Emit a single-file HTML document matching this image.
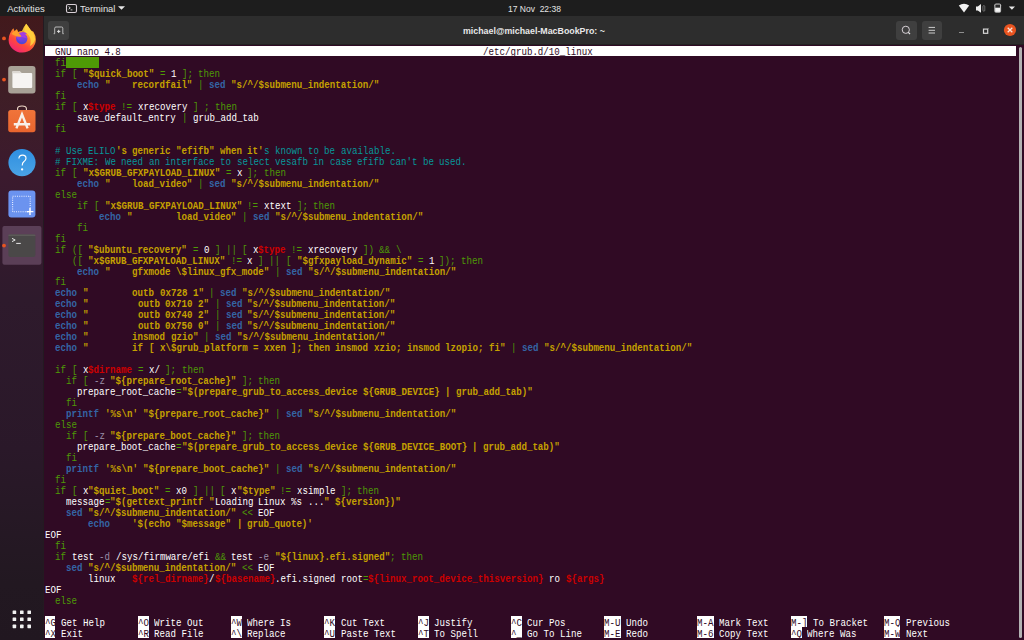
<!DOCTYPE html>
<html><head><meta charset="utf-8">
<style>
html,body{margin:0;padding:0;width:1024px;height:640px;overflow:hidden;background:#300a24;}
body{position:relative;font-family:"Liberation Sans",sans-serif;}
.a{position:absolute;}
#top{left:0;top:0;width:1024px;height:16px;background:#1d1d1d;}
#dock{left:0;top:16px;width:44px;height:624px;background:linear-gradient(180deg,#42191c 0%,#3f1e26 12.7%,#3b1a2e 25.5%,#2e1a2c 45.5%,#2a1829 69.5%,#221821 91%,#211720 100%);}
#dedge{left:43px;top:16px;width:1px;height:624px;background:#231a21;}
#hdr{left:44px;top:16px;width:980px;height:28px;background:#2d2d2d;}
#hline{left:44px;top:44px;width:980px;height:1px;background:#222222;}
#term{left:44px;top:45px;width:980px;height:595px;background:#300a24;}
#tbar{left:44.5px;top:45.6px;width:971px;height:10.75px;background:#ffffff;}
#sb{left:1018.6px;top:46.8px;width:3.6px;height:590.8px;background:#b3b3b3;border-radius:1.8px;}
.tt{position:absolute;white-space:pre;transform-origin:0 0;color:#e4e4e4;font-size:10px;line-height:12px;}
.btn{position:absolute;background:#3f3f3f;border-radius:3px;}
i{position:absolute;font-style:normal;font-family:"Liberation Mono",monospace;font-size:10px;line-height:10.97px;white-space:pre;transform-origin:0 0;transform:scaleX(0.9143);margin-top:2.5px;}
i.n{color:#ffffff;}
i.g{color:#4e9a06;}
i.b{color:#3465a4;font-weight:bold;}
i.r{color:#cc0000;font-weight:bold;}
i.c{color:#06989a;}
i.y{color:#c4a000;font-weight:bold;}
i.d{color:#9a90a8;}
i.k{color:#300a24;}
.hk{position:absolute;background:#ffffff;}
.tws{position:absolute;background:#4e9a06;}
</style></head><body>
<div id="top" class="a"></div>
<div id="dock" class="a"></div>
<div id="dedge" class="a"></div>
<div id="hdr" class="a"></div>
<div id="hline" class="a"></div>
<div id="term" class="a"></div>
<div id="tbar" class="a"></div>
<div id="sb" class="a"></div>

<!-- top bar text -->
<div class="tt" style="left:7.2px;top:3px;font-size:9.5px;transform:scaleX(1.0)">Activities</div>
<svg class="a" style="left:65px;top:3px" width="13" height="11" viewBox="0 0 13 11">
 <rect x="1.5" y="1.5" width="10" height="8" rx="1.6" fill="none" stroke="#d8cfd6" stroke-width="1.1"/>
 <path d="M3.6 3.6 L5.3 4.9 L3.6 6.2" fill="none" stroke="#e0e0e0" stroke-width="0.9"/>
 <path d="M5.6 6.9 H7.4" stroke="#e0e0e0" stroke-width="0.9"/>
</svg>
<div class="tt" style="left:79.8px;top:3px;font-size:9.5px;transform:scaleX(0.986)">Terminal</div>
<svg class="a" style="left:117px;top:5px" width="9" height="6" viewBox="0 0 9 6"><path d="M1 1.3 H8 L4.5 4.8Z" fill="#e8e8e8"/></svg>
<div class="tt" style="left:507.9px;top:2.5px;font-size:9px;transform:scaleX(0.944)">17 Nov  22:38</div>

<!-- tray icons -->
<svg class="a" style="left:958px;top:3px" width="12" height="11" viewBox="0 0 12 11"><path d="M0.8 2.6 Q6 -1.2 11.2 2.6 L6 9.4 Z" fill="#f2f2f2"/></svg>
<svg class="a" style="left:975px;top:3px" width="11" height="11" viewBox="0 0 11 11">
 <path d="M1 3.6 H2.8 L6 1 V9.8 L2.8 7.4 H1 Z" fill="#efefef"/>
 <rect x="7.9" y="2.6" width="1.9" height="5.6" rx="0.95" fill="none" stroke="#8c8c8c" stroke-width="0.7"/>
</svg>
<svg class="a" style="left:993px;top:2.5px" width="9" height="11" viewBox="0 0 9 11">
 <rect x="1.3" y="0.4" width="6.8" height="9.4" rx="1.8" fill="#bdbdbd"/>
 <rect x="2.4" y="1.6" width="4.6" height="3.2" fill="#2a2a2a"/>
 <rect x="2.4" y="4.8" width="4.6" height="3.9" fill="#f4f4f4"/>
</svg>
<svg class="a" style="left:1008px;top:5px" width="8" height="6" viewBox="0 0 8 6"><path d="M0.8 1.5 H7 L3.9 4.8Z" fill="#e8e8e8"/></svg>

<!-- header -->
<div class="btn" style="left:48.1px;top:21px;width:20.8px;height:19px;"></div>
<svg class="a" style="left:48px;top:21px" width="21" height="19" viewBox="0 0 21 19">
 <path d="M6.7 12.6 V7.2 Q6.7 6 7.9 6 H13.6 Q14.8 6 14.8 7.2 V12.6" fill="none" stroke="#d0d0d0" stroke-width="0.85"/>
 <path d="M5.6 12.7 H7 M14.5 12.7 H15.9" stroke="#d0d0d0" stroke-width="0.7"/>
 <path d="M9.1 10.4 H12.3 M10.7 8.8 V12" stroke="#e6e6e6" stroke-width="1"/>
</svg>
<div class="tt" style="left:462.8px;top:24.6px;font-size:9.4px;font-weight:bold;color:#e8e8e8;transform:scaleX(0.942)">michael@michael-MacBookPro: ~</div>
<div class="btn" style="left:895.9px;top:21px;width:20.8px;height:19px;"></div>
<svg class="a" style="left:896px;top:21px" width="21" height="19" viewBox="0 0 21 19">
 <circle cx="9.8" cy="8.8" r="3.6" fill="none" stroke="#d9d2d8" stroke-width="1"/>
 <path d="M12.3 11.3 L14 13" stroke="#e6e6e6" stroke-width="1.2"/>
</svg>
<div class="btn" style="left:922.1px;top:21px;width:19.7px;height:19px;"></div>
<svg class="a" style="left:922px;top:21px" width="20" height="19" viewBox="0 0 20 19">
 <path d="M6.6 6.4 H13 M6.6 9.3 H13 M6.6 12 H13" stroke="#dedede" stroke-width="0.9"/>
</svg>
<div class="a" style="left:958.8px;top:31.5px;width:5.2px;height:1.4px;background:#8e8e8e;"></div>
<svg class="a" style="left:982px;top:27px" width="8" height="8" viewBox="0 0 8 8">
 <rect x="1.5" y="2.1" width="4.2" height="4.2" fill="none" stroke="#d6d6d6" stroke-width="1.2"/>
 <path d="M5.6 2.2 L6.8 0.9" stroke="#aaaaaa" stroke-width="0.6"/>
</svg>
<svg class="a" style="left:1003px;top:23px" width="14" height="14" viewBox="0 0 14 14">
 <circle cx="7" cy="7" r="6.1" fill="#e95420"/>
 <path d="M4.7 4.7 L9.3 9.3 M9.3 4.7 L4.7 9.3" stroke="#fbe6dc" stroke-width="1.3"/>
</svg>

<!-- dock -->
<div class="a" style="left:2.5px;top:3px;"></div>
<svg class="a" style="left:0;top:16px" width="44" height="624" viewBox="0 16 44 624">
 <defs>
  <radialGradient id="ffo" cx="0.3" cy="0.85" r="0.9">
   <stop offset="0" stop-color="#ff3d79"/><stop offset="0.45" stop-color="#ff6a2a"/><stop offset="0.8" stop-color="#ffb320"/><stop offset="1" stop-color="#ffe040"/>
  </radialGradient>
  <radialGradient id="ffp" cx="0.4" cy="0.7" r="0.8">
   <stop offset="0" stop-color="#5b3ed8"/><stop offset="1" stop-color="#a238d6"/>
  </radialGradient>
  <linearGradient id="sw" x1="0" y1="0" x2="0" y2="1"><stop offset="0" stop-color="#f0743a"/><stop offset="1" stop-color="#e9652e"/></linearGradient>
  <linearGradient id="hp" x1="0" y1="0" x2="0" y2="1"><stop offset="0" stop-color="#2f8fe0"/><stop offset="1" stop-color="#4aa3e6"/></linearGradient>
 </defs>
 <!-- running dots -->
 <circle cx="4" cy="38.4" r="1.9" fill="#e95420"/>
 <circle cx="4" cy="79.6" r="1.9" fill="#e95420"/>
 <!-- firefox -->
 <defs>
  <linearGradient id="ffb" x1="0.2" y1="1" x2="0.8" y2="0">
   <stop offset="0" stop-color="#ee1f7d"/><stop offset="0.35" stop-color="#ff4a3a"/><stop offset="0.65" stop-color="#ff9a2a"/><stop offset="1" stop-color="#ffd83a"/>
  </linearGradient>
  <linearGradient id="ffg" x1="0.3" y1="0" x2="0.6" y2="1">
   <stop offset="0" stop-color="#b23fe0"/><stop offset="0.5" stop-color="#7a3fe0"/><stop offset="1" stop-color="#4f46d6"/>
  </linearGradient>
 </defs>
 <path d="M10.2 33 Q12 29.5 13.4 28.3 Q14 30.5 14.8 31.2 Q16 29.5 17 29.3 Q17.4 31 18 32 Q20 31 22 31 L25 32 Q23.5 28 26.2 23.8 Q29 27.5 31 30.5 Q32.8 31.5 33.4 31.8 Q35.8 35.5 35.8 39.6 A13.4 12.6 0 0 1 8.6 40 Q8.6 36 10.2 33Z" fill="url(#ffb)"/>
 <path d="M22 31 Q23.5 27 26.2 23.8 Q29 27.5 31 30.5 Q34.5 34 35.2 39 Q34 44 30 46 Q32 40 28.5 35 Q26 32 22 31Z" fill="#ffd23e" opacity="0.9"/>
 <circle cx="21.8" cy="38.6" r="5.6" fill="url(#ffg)"/>
 <path d="M18.5 33.8 Q21 31.6 24.4 32.2 Q26.6 32.8 27 34.2 Q25.4 33.8 24.6 34.6 Q26.6 36.4 27.2 38.6 L22 37Z" fill="#a23de0"/>
 <path d="M11.5 34 Q13 31.2 14.8 31.2 Q16 29.8 17 29.4 Q17.6 32 19 33.6 Q21 35.6 21.6 36.5 Q18 37 16.5 36.2 Q14 35.4 11.5 34Z" fill="#ff9f2c"/>
 <path d="M16.2 36.2 Q17 39.6 19.6 41.6 Q22.5 43 26 42.4 Q24 43.8 21.8 44 A5.6 5.6 0 0 1 16.2 38.4Z" fill="#4f46d6" opacity="0.8"/>
 <!-- files -->
 <rect x="8.2" y="66" width="27.3" height="27.5" rx="3" fill="#a8a196"/>
 <path d="M12.4 72 Q12.4 71 13.4 71 H19.5 L21.6 73 H31.2 Q32.2 73 32.2 74 V87 Q32.2 88 31.2 88 H13.4 Q12.4 88 12.4 87 Z" fill="#f6f4f2"/>
 <path d="M12.4 72.2 Q12.4 71 13.4 71 H19.5 L21.6 73.2 H12.4Z" fill="#dcd8d2"/>
 <!-- software -->
 <path d="M17.6 110.4 V108.6 Q17.6 106 22 106 Q26.4 106 26.4 108.6 V110.4" fill="none" stroke="#efd9c8" stroke-width="1.1"/>
 <rect x="8.2" y="110" width="27.3" height="22.2" rx="2.6" fill="url(#sw)"/>
 <path d="M16.4 128.4 L22 114.2 L27.6 128.4 M13.8 124.2 H30.2" fill="none" stroke="#f8efe8" stroke-width="2.4"/>
 <!-- help -->
 <circle cx="22" cy="162.6" r="13.6" fill="url(#hp)"/>
 <path d="M18.9 158.4 Q19 155.1 22.6 155.1 Q26 155.1 26 158.2 Q26 160.2 24 161.6 Q22.2 162.8 22.2 165.6" fill="none" stroke="#ffffff" stroke-width="1.15"/>
 <circle cx="22.1" cy="169.4" r="1.15" fill="#ffffff"/>
 <!-- screenshot -->
 <rect x="8.4" y="190.5" width="27" height="27" rx="3" fill="#6b93ef"/>
 <rect x="12.6" y="196.3" width="17.6" height="15.4" fill="none" stroke="#e8eeff" stroke-width="1.1" stroke-dasharray="1 1.2"/>
 <path d="M30 208 V215 M26.6 211.6 H33.4" stroke="#ffffff" stroke-width="1.4"/>
 <!-- terminal active -->
 <rect x="2.4" y="226" width="39" height="38.8" rx="2" fill="#5b3f57"/>
 <rect x="8.4" y="234.5" width="27" height="22.5" rx="2" fill="#4a4848"/>
 <path d="M8.4 235.5 Q8.4 234.5 9.4 234.5 H34.4 Q35.4 234.5 35.4 235.5 V236 H8.4Z" fill="#5c5a58"/>
 <path d="M12 238.4 L15.2 240 L12 241.6" fill="none" stroke="#e8e8e8" stroke-width="1"/>
 <path d="M16.2 243.4 H20.8" stroke="#e8e8e8" stroke-width="1"/>
 <circle cx="4" cy="245.6" r="1.9" fill="#e95420"/>
 <!-- show apps grid -->
 <g fill="#f2f2f2">
  <rect x="12.6" y="610.4" width="3.6" height="3.6" rx="0.6"/><rect x="20" y="610.4" width="3.6" height="3.6" rx="0.6"/><rect x="27.4" y="610.4" width="3.6" height="3.6" rx="0.6"/>
  <rect x="12.6" y="617.4" width="3.6" height="3.6" rx="0.6"/><rect x="20" y="617.4" width="3.6" height="3.6" rx="0.6"/><rect x="27.4" y="617.4" width="3.6" height="3.6" rx="0.6"/>
  <rect x="12.6" y="624.6" width="3.6" height="3.6" rx="0.6"/><rect x="20" y="624.6" width="3.6" height="3.6" rx="0.6"/><rect x="27.4" y="624.6" width="3.6" height="3.6" rx="0.6"/>
 </g>
</svg>

<div class="tws" style="left:66.44px;top:56.57px;width:32.92px;height:10.97px"></div>
<i class="g" style="left:55.47px;top:56.57px">fi</i>
<i class="g" style="left:55.47px;top:67.54px">if</i>
<i class="g" style="left:71.93px;top:67.54px">[</i>
<i class="y" style="left:82.90px;top:67.54px">&quot;$quick_boot&quot;</i>
<i class="g" style="left:159.71px;top:67.54px">=</i>
<i class="n" style="left:170.68px;top:67.54px">1</i>
<i class="g" style="left:181.65px;top:67.54px">];</i>
<i class="g" style="left:198.11px;top:67.54px">then</i>
<i class="b" style="left:77.42px;top:78.51px">echo</i>
<i class="y" style="left:104.85px;top:78.51px">&quot;</i>
<i class="y" style="left:132.28px;top:78.51px">recordfail&quot;</i>
<i class="g" style="left:198.11px;top:78.51px">|</i>
<i class="b" style="left:209.08px;top:78.51px">sed</i>
<i class="y" style="left:231.02px;top:78.51px">&quot;s/^/$submenu_indentation/&quot;</i>
<i class="g" style="left:55.47px;top:89.48px">fi</i>
<i class="g" style="left:55.47px;top:100.45px">if</i>
<i class="g" style="left:71.93px;top:100.45px">[</i>
<i class="n" style="left:82.90px;top:100.45px">x</i>
<i class="r" style="left:88.39px;top:100.45px">$type</i>
<i class="g" style="left:121.30px;top:100.45px">!=</i>
<i class="n" style="left:137.76px;top:100.45px">xrecovery</i>
<i class="g" style="left:192.62px;top:100.45px">]</i>
<i class="g" style="left:203.59px;top:100.45px">;</i>
<i class="g" style="left:214.57px;top:100.45px">then</i>
<i class="n" style="left:77.42px;top:111.42px">save_default_entry</i>
<i class="g" style="left:181.65px;top:111.42px">|</i>
<i class="n" style="left:192.62px;top:111.42px">grub_add_tab</i>
<i class="g" style="left:55.47px;top:122.39px">fi</i>
<i class="c" style="left:55.47px;top:144.33px">#</i>
<i class="c" style="left:66.44px;top:144.33px">Use</i>
<i class="c" style="left:88.39px;top:144.33px">ELILO</i>
<i class="y" style="left:115.82px;top:144.33px">&#x27;s</i>
<i class="y" style="left:132.28px;top:144.33px">generic</i>
<i class="y" style="left:176.16px;top:144.33px">&quot;efifb&quot;</i>
<i class="y" style="left:220.05px;top:144.33px">when</i>
<i class="y" style="left:247.48px;top:144.33px">it&#x27;</i>
<i class="c" style="left:263.94px;top:144.33px">s</i>
<i class="c" style="left:274.91px;top:144.33px">known</i>
<i class="c" style="left:307.83px;top:144.33px">to</i>
<i class="c" style="left:324.29px;top:144.33px">be</i>
<i class="c" style="left:340.74px;top:144.33px">available.</i>
<i class="c" style="left:55.47px;top:155.30px">#</i>
<i class="c" style="left:66.44px;top:155.30px">FIXME:</i>
<i class="c" style="left:104.85px;top:155.30px">We</i>
<i class="c" style="left:121.30px;top:155.30px">need</i>
<i class="c" style="left:148.73px;top:155.30px">an</i>
<i class="c" style="left:165.19px;top:155.30px">interface</i>
<i class="c" style="left:220.05px;top:155.30px">to</i>
<i class="c" style="left:236.51px;top:155.30px">select</i>
<i class="c" style="left:274.91px;top:155.30px">vesafb</i>
<i class="c" style="left:313.31px;top:155.30px">in</i>
<i class="c" style="left:329.77px;top:155.30px">case</i>
<i class="c" style="left:357.20px;top:155.30px">efifb</i>
<i class="c" style="left:390.12px;top:155.30px">can&#x27;t</i>
<i class="c" style="left:423.03px;top:155.30px">be</i>
<i class="c" style="left:439.49px;top:155.30px">used.</i>
<i class="g" style="left:55.47px;top:166.27px">if</i>
<i class="g" style="left:71.93px;top:166.27px">[</i>
<i class="y" style="left:82.90px;top:166.27px">&quot;x$GRUB_GFXPAYLOAD_LINUX&quot;</i>
<i class="g" style="left:225.54px;top:166.27px">=</i>
<i class="n" style="left:236.51px;top:166.27px">x</i>
<i class="g" style="left:247.48px;top:166.27px">];</i>
<i class="g" style="left:263.94px;top:166.27px">then</i>
<i class="b" style="left:77.42px;top:177.24px">echo</i>
<i class="y" style="left:104.85px;top:177.24px">&quot;</i>
<i class="y" style="left:132.28px;top:177.24px">load_video&quot;</i>
<i class="g" style="left:198.11px;top:177.24px">|</i>
<i class="b" style="left:209.08px;top:177.24px">sed</i>
<i class="y" style="left:231.02px;top:177.24px">&quot;s/^/$submenu_indentation/&quot;</i>
<i class="g" style="left:55.47px;top:188.21px">else</i>
<i class="g" style="left:77.42px;top:199.18px">if</i>
<i class="g" style="left:93.87px;top:199.18px">[</i>
<i class="y" style="left:104.85px;top:199.18px">&quot;x$GRUB_GFXPAYLOAD_LINUX&quot;</i>
<i class="g" style="left:247.48px;top:199.18px">!=</i>
<i class="n" style="left:263.94px;top:199.18px">xtext</i>
<i class="g" style="left:296.86px;top:199.18px">];</i>
<i class="g" style="left:313.31px;top:199.18px">then</i>
<i class="b" style="left:99.36px;top:210.15px">echo</i>
<i class="y" style="left:126.79px;top:210.15px">&quot;</i>
<i class="y" style="left:176.16px;top:210.15px">load_video&quot;</i>
<i class="g" style="left:242.00px;top:210.15px">|</i>
<i class="b" style="left:252.97px;top:210.15px">sed</i>
<i class="y" style="left:274.91px;top:210.15px">&quot;s/^/$submenu_indentation/&quot;</i>
<i class="g" style="left:77.42px;top:221.12px">fi</i>
<i class="g" style="left:55.47px;top:232.09px">fi</i>
<i class="g" style="left:55.47px;top:243.06px">if</i>
<i class="g" style="left:71.93px;top:243.06px">([</i>
<i class="y" style="left:88.39px;top:243.06px">&quot;$ubuntu_recovery&quot;</i>
<i class="g" style="left:192.62px;top:243.06px">=</i>
<i class="n" style="left:203.59px;top:243.06px">0</i>
<i class="g" style="left:214.57px;top:243.06px">]</i>
<i class="g" style="left:225.54px;top:243.06px">||</i>
<i class="g" style="left:242.00px;top:243.06px">[</i>
<i class="n" style="left:252.97px;top:243.06px">x</i>
<i class="r" style="left:258.45px;top:243.06px">$type</i>
<i class="g" style="left:291.37px;top:243.06px">!=</i>
<i class="n" style="left:307.83px;top:243.06px">xrecovery</i>
<i class="g" style="left:362.69px;top:243.06px">])</i>
<i class="g" style="left:379.15px;top:243.06px">&amp;&amp;</i>
<i class="g" style="left:395.60px;top:243.06px">\</i>
<i class="g" style="left:71.93px;top:254.03px">([</i>
<i class="y" style="left:88.39px;top:254.03px">&quot;x$GRUB_GFXPAYLOAD_LINUX&quot;</i>
<i class="g" style="left:231.02px;top:254.03px">!=</i>
<i class="n" style="left:247.48px;top:254.03px">x</i>
<i class="g" style="left:258.45px;top:254.03px">]</i>
<i class="g" style="left:269.43px;top:254.03px">||</i>
<i class="g" style="left:285.88px;top:254.03px">[</i>
<i class="y" style="left:296.86px;top:254.03px">&quot;$gfxpayload_dynamic&quot;</i>
<i class="g" style="left:417.55px;top:254.03px">=</i>
<i class="n" style="left:428.52px;top:254.03px">1</i>
<i class="g" style="left:439.49px;top:254.03px">]);</i>
<i class="g" style="left:461.44px;top:254.03px">then</i>
<i class="b" style="left:77.42px;top:265.00px">echo</i>
<i class="y" style="left:104.85px;top:265.00px">&quot;</i>
<i class="y" style="left:132.28px;top:265.00px">gfxmode</i>
<i class="y" style="left:176.16px;top:265.00px">\$linux_gfx_mode&quot;</i>
<i class="g" style="left:274.91px;top:265.00px">|</i>
<i class="b" style="left:285.88px;top:265.00px">sed</i>
<i class="y" style="left:307.83px;top:265.00px">&quot;s/^/$submenu_indentation/&quot;</i>
<i class="g" style="left:55.47px;top:275.97px">fi</i>
<i class="b" style="left:55.47px;top:286.94px">echo</i>
<i class="y" style="left:82.90px;top:286.94px">&quot;</i>
<i class="y" style="left:132.28px;top:286.94px">outb</i>
<i class="y" style="left:159.71px;top:286.94px">0x728</i>
<i class="y" style="left:192.62px;top:286.94px">1&quot;</i>
<i class="g" style="left:209.08px;top:286.94px">|</i>
<i class="b" style="left:220.05px;top:286.94px">sed</i>
<i class="y" style="left:242.00px;top:286.94px">&quot;s/^/$submenu_indentation/&quot;</i>
<i class="b" style="left:55.47px;top:297.91px">echo</i>
<i class="y" style="left:82.90px;top:297.91px">&quot;</i>
<i class="y" style="left:137.76px;top:297.91px">outb</i>
<i class="y" style="left:165.19px;top:297.91px">0x710</i>
<i class="y" style="left:198.11px;top:297.91px">2&quot;</i>
<i class="g" style="left:214.57px;top:297.91px">|</i>
<i class="b" style="left:225.54px;top:297.91px">sed</i>
<i class="y" style="left:247.48px;top:297.91px">&quot;s/^/$submenu_indentation/&quot;</i>
<i class="b" style="left:55.47px;top:308.88px">echo</i>
<i class="y" style="left:82.90px;top:308.88px">&quot;</i>
<i class="y" style="left:137.76px;top:308.88px">outb</i>
<i class="y" style="left:165.19px;top:308.88px">0x740</i>
<i class="y" style="left:198.11px;top:308.88px">2&quot;</i>
<i class="g" style="left:214.57px;top:308.88px">|</i>
<i class="b" style="left:225.54px;top:308.88px">sed</i>
<i class="y" style="left:247.48px;top:308.88px">&quot;s/^/$submenu_indentation/&quot;</i>
<i class="b" style="left:55.47px;top:319.85px">echo</i>
<i class="y" style="left:82.90px;top:319.85px">&quot;</i>
<i class="y" style="left:137.76px;top:319.85px">outb</i>
<i class="y" style="left:165.19px;top:319.85px">0x750</i>
<i class="y" style="left:198.11px;top:319.85px">0&quot;</i>
<i class="g" style="left:214.57px;top:319.85px">|</i>
<i class="b" style="left:225.54px;top:319.85px">sed</i>
<i class="y" style="left:247.48px;top:319.85px">&quot;s/^/$submenu_indentation/&quot;</i>
<i class="b" style="left:55.47px;top:330.82px">echo</i>
<i class="y" style="left:82.90px;top:330.82px">&quot;</i>
<i class="y" style="left:132.28px;top:330.82px">insmod</i>
<i class="y" style="left:170.68px;top:330.82px">gzio&quot;</i>
<i class="g" style="left:203.59px;top:330.82px">|</i>
<i class="b" style="left:214.57px;top:330.82px">sed</i>
<i class="y" style="left:236.51px;top:330.82px">&quot;s/^/$submenu_indentation/&quot;</i>
<i class="b" style="left:55.47px;top:341.79px">echo</i>
<i class="y" style="left:82.90px;top:341.79px">&quot;</i>
<i class="y" style="left:132.28px;top:341.79px">if</i>
<i class="y" style="left:148.73px;top:341.79px">[</i>
<i class="y" style="left:159.71px;top:341.79px">x\$grub_platform</i>
<i class="y" style="left:252.97px;top:341.79px">=</i>
<i class="y" style="left:263.94px;top:341.79px">xxen</i>
<i class="y" style="left:291.37px;top:341.79px">];</i>
<i class="y" style="left:307.83px;top:341.79px">then</i>
<i class="y" style="left:335.26px;top:341.79px">insmod</i>
<i class="y" style="left:373.66px;top:341.79px">xzio;</i>
<i class="y" style="left:406.58px;top:341.79px">insmod</i>
<i class="y" style="left:444.98px;top:341.79px">lzopio;</i>
<i class="y" style="left:488.87px;top:341.79px">fi&quot;</i>
<i class="g" style="left:510.81px;top:341.79px">|</i>
<i class="b" style="left:521.78px;top:341.79px">sed</i>
<i class="y" style="left:543.73px;top:341.79px">&quot;s/^/$submenu_indentation/&quot;</i>
<i class="g" style="left:55.47px;top:363.73px">if</i>
<i class="g" style="left:71.93px;top:363.73px">[</i>
<i class="n" style="left:82.90px;top:363.73px">x</i>
<i class="r" style="left:88.39px;top:363.73px">$dirname</i>
<i class="g" style="left:137.76px;top:363.73px">=</i>
<i class="n" style="left:148.73px;top:363.73px">x/</i>
<i class="g" style="left:165.19px;top:363.73px">];</i>
<i class="g" style="left:181.65px;top:363.73px">then</i>
<i class="g" style="left:66.44px;top:374.70px">if</i>
<i class="g" style="left:82.90px;top:374.70px">[</i>
<i class="d" style="left:93.87px;top:374.70px">-z</i>
<i class="y" style="left:110.33px;top:374.70px">&quot;${prepare_root_cache}&quot;</i>
<i class="g" style="left:242.00px;top:374.70px">];</i>
<i class="g" style="left:258.45px;top:374.70px">then</i>
<i class="n" style="left:77.42px;top:385.67px">prepare_root_cache</i>
<i class="g" style="left:176.16px;top:385.67px">=</i>
<i class="y" style="left:181.65px;top:385.67px">&quot;$(prepare_grub_to_access_device</i>
<i class="y" style="left:362.69px;top:385.67px">${GRUB_DEVICE}</i>
<i class="y" style="left:444.98px;top:385.67px">|</i>
<i class="y" style="left:455.95px;top:385.67px">grub_add_tab)&quot;</i>
<i class="g" style="left:66.44px;top:396.64px">fi</i>
<i class="b" style="left:66.44px;top:407.61px">printf</i>
<i class="y" style="left:104.85px;top:407.61px">&#x27;%s\n&#x27;</i>
<i class="y" style="left:143.25px;top:407.61px">&quot;${prepare_root_cache}&quot;</i>
<i class="g" style="left:274.91px;top:407.61px">|</i>
<i class="b" style="left:285.88px;top:407.61px">sed</i>
<i class="y" style="left:307.83px;top:407.61px">&quot;s/^/$submenu_indentation/&quot;</i>
<i class="g" style="left:55.47px;top:418.58px">else</i>
<i class="g" style="left:66.44px;top:429.55px">if</i>
<i class="g" style="left:82.90px;top:429.55px">[</i>
<i class="d" style="left:93.87px;top:429.55px">-z</i>
<i class="y" style="left:110.33px;top:429.55px">&quot;${prepare_boot_cache}&quot;</i>
<i class="g" style="left:242.00px;top:429.55px">];</i>
<i class="g" style="left:258.45px;top:429.55px">then</i>
<i class="n" style="left:77.42px;top:440.52px">prepare_boot_cache</i>
<i class="g" style="left:176.16px;top:440.52px">=</i>
<i class="y" style="left:181.65px;top:440.52px">&quot;$(prepare_grub_to_access_device</i>
<i class="y" style="left:362.69px;top:440.52px">${GRUB_DEVICE_BOOT}</i>
<i class="y" style="left:472.41px;top:440.52px">|</i>
<i class="y" style="left:483.38px;top:440.52px">grub_add_tab)&quot;</i>
<i class="g" style="left:66.44px;top:451.49px">fi</i>
<i class="b" style="left:66.44px;top:462.46px">printf</i>
<i class="y" style="left:104.85px;top:462.46px">&#x27;%s\n&#x27;</i>
<i class="y" style="left:143.25px;top:462.46px">&quot;${prepare_boot_cache}&quot;</i>
<i class="g" style="left:274.91px;top:462.46px">|</i>
<i class="b" style="left:285.88px;top:462.46px">sed</i>
<i class="y" style="left:307.83px;top:462.46px">&quot;s/^/$submenu_indentation/&quot;</i>
<i class="g" style="left:55.47px;top:473.43px">fi</i>
<i class="g" style="left:55.47px;top:484.40px">if</i>
<i class="g" style="left:71.93px;top:484.40px">[</i>
<i class="n" style="left:82.90px;top:484.40px">x</i>
<i class="y" style="left:88.39px;top:484.40px">&quot;$quiet_boot&quot;</i>
<i class="g" style="left:165.19px;top:484.40px">=</i>
<i class="n" style="left:176.16px;top:484.40px">x0</i>
<i class="g" style="left:192.62px;top:484.40px">]</i>
<i class="g" style="left:203.59px;top:484.40px">||</i>
<i class="g" style="left:220.05px;top:484.40px">[</i>
<i class="n" style="left:231.02px;top:484.40px">x</i>
<i class="y" style="left:236.51px;top:484.40px">&quot;$type&quot;</i>
<i class="g" style="left:280.40px;top:484.40px">!=</i>
<i class="n" style="left:296.86px;top:484.40px">xsimple</i>
<i class="g" style="left:340.74px;top:484.40px">];</i>
<i class="g" style="left:357.20px;top:484.40px">then</i>
<i class="n" style="left:66.44px;top:495.37px">message</i>
<i class="g" style="left:104.85px;top:495.37px">=</i>
<i class="y" style="left:110.33px;top:495.37px">&quot;$(gettext_printf</i>
<i class="y" style="left:209.08px;top:495.37px">&quot;</i>
<i class="n" style="left:214.57px;top:495.37px">Loading</i>
<i class="n" style="left:258.45px;top:495.37px">Linux</i>
<i class="n" style="left:291.37px;top:495.37px">%s</i>
<i class="n" style="left:307.83px;top:495.37px">...</i>
<i class="y" style="left:324.29px;top:495.37px">&quot;</i>
<i class="y" style="left:335.26px;top:495.37px">${version})&quot;</i>
<i class="b" style="left:66.44px;top:506.34px">sed</i>
<i class="y" style="left:88.39px;top:506.34px">&quot;s/^/$submenu_indentation/&quot;</i>
<i class="g" style="left:242.00px;top:506.34px">&lt;&lt;</i>
<i class="n" style="left:258.45px;top:506.34px">EOF</i>
<i class="b" style="left:88.39px;top:517.31px">echo</i>
<i class="y" style="left:132.28px;top:517.31px">&#x27;$(echo</i>
<i class="y" style="left:176.16px;top:517.31px">&quot;$message&quot;</i>
<i class="y" style="left:236.51px;top:517.31px">|</i>
<i class="y" style="left:247.48px;top:517.31px">grub_quote)&#x27;</i>
<i class="n" style="left:44.50px;top:528.28px">EOF</i>
<i class="g" style="left:55.47px;top:539.25px">fi</i>
<i class="g" style="left:55.47px;top:550.22px">if</i>
<i class="n" style="left:71.93px;top:550.22px">test</i>
<i class="d" style="left:99.36px;top:550.22px">-d</i>
<i class="n" style="left:115.82px;top:550.22px">/sys/firmware/efi</i>
<i class="g" style="left:214.57px;top:550.22px">&amp;&amp;</i>
<i class="n" style="left:231.02px;top:550.22px">test</i>
<i class="d" style="left:258.45px;top:550.22px">-e</i>
<i class="y" style="left:274.91px;top:550.22px">&quot;${linux}.efi.signed&quot;</i>
<i class="g" style="left:390.12px;top:550.22px">;</i>
<i class="g" style="left:401.09px;top:550.22px">then</i>
<i class="b" style="left:66.44px;top:561.19px">sed</i>
<i class="y" style="left:88.39px;top:561.19px">&quot;s/^/$submenu_indentation/&quot;</i>
<i class="g" style="left:242.00px;top:561.19px">&lt;&lt;</i>
<i class="n" style="left:258.45px;top:561.19px">EOF</i>
<i class="n" style="left:88.39px;top:572.16px">linux</i>
<i class="r" style="left:132.28px;top:572.16px">${rel_dirname}</i>
<i class="n" style="left:209.08px;top:572.16px">/</i>
<i class="r" style="left:214.57px;top:572.16px">${basename}</i>
<i class="n" style="left:274.91px;top:572.16px">.efi.signed</i>
<i class="n" style="left:340.74px;top:572.16px">root</i>
<i class="g" style="left:362.69px;top:572.16px">=</i>
<i class="r" style="left:368.17px;top:572.16px">${linux_root_device_thisversion}</i>
<i class="n" style="left:549.21px;top:572.16px">ro</i>
<i class="r" style="left:565.67px;top:572.16px">${args}</i>
<i class="n" style="left:44.50px;top:583.13px">EOF</i>
<i class="g" style="left:55.47px;top:594.10px">else</i>
<div class="hk" style="left:44.50px;top:616.04px;width:10.97px;height:10.97px"></div>
<i class="k" style="left:44.50px;top:616.04px">^G</i>
<i class="n" style="left:60.96px;top:616.04px">Get Help</i>
<div class="hk" style="left:137.76px;top:616.04px;width:10.97px;height:10.97px"></div>
<i class="k" style="left:137.76px;top:616.04px">^O</i>
<i class="n" style="left:154.22px;top:616.04px">Write Out</i>
<div class="hk" style="left:231.02px;top:616.04px;width:10.97px;height:10.97px"></div>
<i class="k" style="left:231.02px;top:616.04px">^W</i>
<i class="n" style="left:247.48px;top:616.04px">Where Is</i>
<div class="hk" style="left:324.29px;top:616.04px;width:10.97px;height:10.97px"></div>
<i class="k" style="left:324.29px;top:616.04px">^K</i>
<i class="n" style="left:340.74px;top:616.04px">Cut Text</i>
<div class="hk" style="left:417.55px;top:616.04px;width:10.97px;height:10.97px"></div>
<i class="k" style="left:417.55px;top:616.04px">^J</i>
<i class="n" style="left:434.01px;top:616.04px">Justify</i>
<div class="hk" style="left:510.81px;top:616.04px;width:10.97px;height:10.97px"></div>
<i class="k" style="left:510.81px;top:616.04px">^C</i>
<i class="n" style="left:527.27px;top:616.04px">Cur Pos</i>
<div class="hk" style="left:604.07px;top:616.04px;width:16.46px;height:10.97px"></div>
<i class="k" style="left:604.07px;top:616.04px">M-U</i>
<i class="n" style="left:626.02px;top:616.04px">Undo</i>
<div class="hk" style="left:697.33px;top:616.04px;width:16.46px;height:10.97px"></div>
<i class="k" style="left:697.33px;top:616.04px">M-A</i>
<i class="n" style="left:719.28px;top:616.04px">Mark Text</i>
<div class="hk" style="left:790.60px;top:616.04px;width:16.46px;height:10.97px"></div>
<i class="k" style="left:790.60px;top:616.04px">M-]</i>
<i class="n" style="left:812.54px;top:616.04px">To Bracket</i>
<div class="hk" style="left:883.86px;top:616.04px;width:16.46px;height:10.97px"></div>
<i class="k" style="left:883.86px;top:616.04px">M-Q</i>
<i class="n" style="left:905.80px;top:616.04px">Previous</i>
<div class="hk" style="left:44.50px;top:627.01px;width:10.97px;height:10.97px"></div>
<i class="k" style="left:44.50px;top:627.01px">^X</i>
<i class="n" style="left:60.96px;top:627.01px">Exit</i>
<div class="hk" style="left:137.76px;top:627.01px;width:10.97px;height:10.97px"></div>
<i class="k" style="left:137.76px;top:627.01px">^R</i>
<i class="n" style="left:154.22px;top:627.01px">Read File</i>
<div class="hk" style="left:231.02px;top:627.01px;width:10.97px;height:10.97px"></div>
<i class="k" style="left:231.02px;top:627.01px">^\</i>
<i class="n" style="left:247.48px;top:627.01px">Replace</i>
<div class="hk" style="left:324.29px;top:627.01px;width:10.97px;height:10.97px"></div>
<i class="k" style="left:324.29px;top:627.01px">^U</i>
<i class="n" style="left:340.74px;top:627.01px">Paste Text</i>
<div class="hk" style="left:417.55px;top:627.01px;width:10.97px;height:10.97px"></div>
<i class="k" style="left:417.55px;top:627.01px">^T</i>
<i class="n" style="left:434.01px;top:627.01px">To Spell</i>
<div class="hk" style="left:510.81px;top:627.01px;width:10.97px;height:10.97px"></div>
<i class="k" style="left:510.81px;top:627.01px">^_</i>
<i class="n" style="left:527.27px;top:627.01px">Go To Line</i>
<div class="hk" style="left:604.07px;top:627.01px;width:16.46px;height:10.97px"></div>
<i class="k" style="left:604.07px;top:627.01px">M-E</i>
<i class="n" style="left:626.02px;top:627.01px">Redo</i>
<div class="hk" style="left:697.33px;top:627.01px;width:16.46px;height:10.97px"></div>
<i class="k" style="left:697.33px;top:627.01px">M-6</i>
<i class="n" style="left:719.28px;top:627.01px">Copy Text</i>
<div class="hk" style="left:790.60px;top:627.01px;width:10.97px;height:10.97px"></div>
<i class="k" style="left:790.60px;top:627.01px">^Q</i>
<i class="n" style="left:807.05px;top:627.01px">Where Was</i>
<div class="hk" style="left:883.86px;top:627.01px;width:16.46px;height:10.97px"></div>
<i class="k" style="left:883.86px;top:627.01px">M-W</i>
<i class="n" style="left:905.80px;top:627.01px">Next</i>
<i class="k" style="left:55.47px;top:45.60px">GNU nano 4.8</i>
<i class="k" style="left:483.38px;top:45.60px">/etc/grub.d/10_linux</i>
</body></html>
